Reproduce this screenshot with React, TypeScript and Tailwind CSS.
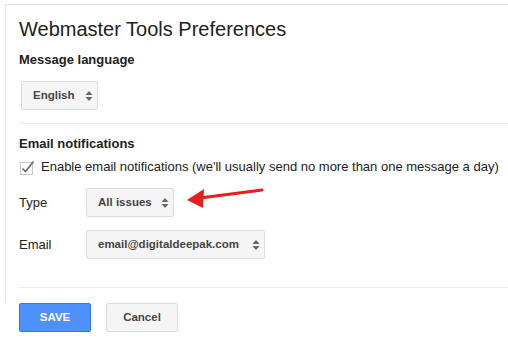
import React from 'react';

const SelectArrows = () => (
  <svg width="8" height="12" viewBox="0 0 8 12" className="shrink-0">
    <path d="M0.5 5 L4 1 L7.5 5 Z" fill="#666" />
    <path d="M0.5 7 L7.5 7 L4 11 Z" fill="#666" />
  </svg>
);

const Select = ({ label, width }: { label: string; width: string }) => (
  <div
    className={`flex items-center justify-between h-[29px] ${width} pl-[11px] pr-[4px] bg-[#f5f5f5] border border-[#dcdcdc] rounded-[2px] text-[11.5px] font-bold text-[#444] whitespace-nowrap`}
  >
    <span>{label}</span>
    <SelectArrows />
  </div>
);

const Checkbox = () => (
  <svg width="16" height="16" viewBox="0 0 16 16" className="shrink-0 mt-[1px]">
    <rect x="0.5" y="2.5" width="12" height="12" fill="#fff" stroke="#c6c6c6" />
    <path d="M2.5 8.5 L5.5 11.5 L13.5 1.5" fill="none" stroke="#6a6a6a" strokeWidth="1.6" />
  </svg>
);

const App = () => {
  return (
    <div className="relative w-[508px] h-[348px] overflow-hidden bg-white text-[#222] font-['Liberation_Sans',Arial,sans-serif]">
      {/* preferences panel */}
      <div className="ml-[5px] mt-[4px] border-l border-t border-[#e5e5e5] pl-[13px] pt-[12px] pb-[13px]">
        <h1 className="text-[20px] leading-[24px] font-normal">Webmaster Tools Preferences</h1>

        <div className="mt-[11px] text-[13px] leading-[16px] font-bold">Message language</div>
        <div className="mt-[13px] ml-[2px]">
          <Select label="English" width="w-[77px]" />
        </div>

        <div className="mt-[13px] h-px bg-[#ebebeb]" />

        <div className="mt-[12px] text-[13px] leading-[16px] font-bold">Email notifications</div>
        <div className="mt-[7px] flex items-start gap-[5px] ml-[1px] text-[13px] leading-[16px] whitespace-nowrap">
          <Checkbox />
          <span>Enable email notifications (we'll usually send no more than one message a day)</span>
        </div>

        <div className="mt-[12px] flex items-center text-[13px]">
          <span className="w-[67px]">Type</span>
          <Select label="All issues" width="w-[88px]" />
        </div>

        <div className="mt-[13px] flex items-center text-[13px]">
          <span className="w-[67px]">Email</span>
          <Select label="email@digitaldeepak.com" width="w-[179px]" />
        </div>

        <div className="mt-[28px] h-px bg-[#ebebeb]" />
      </div>

      {/* actions */}
      <div className="mt-[2px] ml-[19px] flex gap-[15px]">
        <button className="w-[72px] h-[29px] rounded-[2px] bg-[#4d90fe] border border-[#3079ed] text-white text-[11.5px] font-bold">
          SAVE
        </button>
        <button className="w-[72px] h-[29px] rounded-[2px] bg-[#f5f5f5] border border-[#dcdcdc] text-[#444] text-[11.5px] font-bold">
          Cancel
        </button>
      </div>

      {/* annotation arrow */}
      <svg className="absolute left-0 top-0 pointer-events-none" width="508" height="348">
        <path d="M262 190 L200 198" stroke="#e3201b" strokeWidth="3" strokeLinecap="round" fill="none" />
        <path d="M187 200 L204 189 L203 208 Z" fill="#e3201b" />
      </svg>
    </div>
  );
};

export default App;
